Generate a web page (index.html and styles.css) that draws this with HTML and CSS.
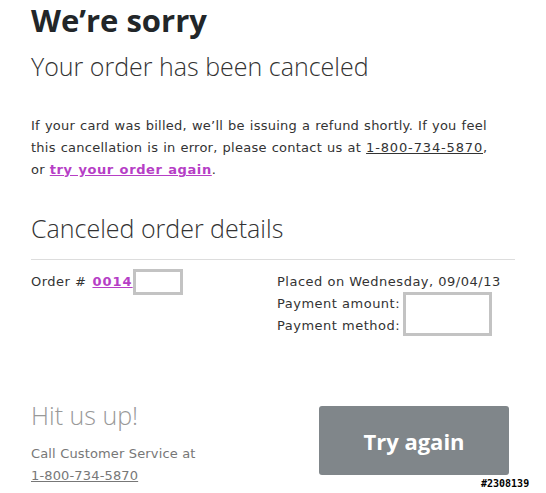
FILE: index.html
```html
<!DOCTYPE html>
<html>
<head>
<meta charset="utf-8">
<link rel="stylesheet" href="styles.css">
</head>
<body>
<main class="page">
  <h1 class="title">We’re sorry</h1>
  <h2 class="subtitle">Your order has been canceled</h2>
  <p class="message">If your card was billed, we’ll be issuing a refund shortly. If you feel this cancellation is in error, please contact us at <a class="phone" href="#">1-800-734-5870</a>, or <a class="link" href="#">try your order again</a>.</p>
  <h2 class="section-title">Canceled order details</h2>
  <div class="details">
    <div class="order">Order # <a class="link order-link" href="#">0014</a><span class="redact redact-small"></span></div>
    <div class="meta">
      <div>Placed on Wednesday, 09/04/13</div>
      <div class="payment">
        <div class="labels">
          <div>Payment amount:</div>
          <div>Payment method:</div>
        </div>
        <span class="redact redact-large"></span>
      </div>
    </div>
  </div>
  <div class="footer">
    <div class="contact">
      <h3 class="contact-title">Hit us up!</h3>
      <p class="contact-text">Call Customer Service at<br><a class="contact-phone" href="#">1-800-734-5870</a></p>
    </div>
    <a class="button" href="#">Try again</a>
  </div>
</main>
<span class="stamp">#2308139</span>
</body>
</html>
```
FILE: styles.css
```css
html, body { margin: 0; padding: 0; background: #fff; }
body { font-family: "DejaVu Sans", Verdana, sans-serif; color: #333; }
.page { width: 484px; padding: 0 0 0 31px; }
.title { font-family: "Open Sans", sans-serif; font-weight: 700; font-size: 31px; line-height: 40px; margin: 0; color: #222629; }
.subtitle { font-family: "Open Sans", sans-serif; font-weight: 300; font-size: 25px; line-height: 32px; margin: 10px 0 0; color: #333; }
.message { width: 462px; font-size: 13px; letter-spacing: 0.25px; word-spacing: 0.6px; line-height: 22px; margin: 33px 0 0; color: #333; }
.phone { color: #333; letter-spacing: 0.85px; }
.link { color: #b63ec6; font-weight: 700; letter-spacing: 0.6px; }
.section-title { font-family: "Open Sans", sans-serif; font-weight: 300; font-size: 25px; line-height: 32px; margin: 31px 0 0; color: #333; padding-bottom: 15px; border-bottom: 1px solid #ddd; }
.details { display: flex; font-size: 13px; letter-spacing: 0.5px; line-height: 22px; padding-top: 11px; }
.order { width: 246px; display: flex; align-items: flex-start; }
.order-link { margin-left: 6px; letter-spacing: 1px; }
.redact { display: inline-block; box-sizing: border-box; border: 3px solid #c3c3c3; background: #fff; }
.redact-small { width: 50px; height: 26px; margin-top: -2px; }
.meta { flex: 1; }
.payment { display: flex; align-items: flex-start; }
.redact-large { width: 89px; height: 44px; margin-left: 3px; margin-top: -1px; }
.footer { display: flex; justify-content: space-between; margin-top: 62px; padding-right: 6px; }
.contact-title { font-family: "Open Sans", sans-serif; font-weight: 300; font-size: 25px; line-height: 32px; margin: 0; color: #999; }
.contact-text { font-size: 13px; letter-spacing: 0.15px; line-height: 22px; margin: 12px 0 0; color: #777; }
.contact-phone { color: #777; }
.button { width: 190px; height: 69px; margin-top: 7px; border-radius: 3px; background: #80868a; color: #fff; text-decoration: none; display: flex; align-items: center; justify-content: center; font-family: "Open Sans", sans-serif; font-weight: 700; font-size: 22px; }
.stamp { position: absolute; left: 481px; top: 478px; font-family: "DejaVu Sans Mono", monospace; font-size: 10px; font-weight: 700; color: #000; text-shadow: 1px 0 #fff, -1px 0 #fff, 0 1px #fff, 0 -1px #fff; }
```
